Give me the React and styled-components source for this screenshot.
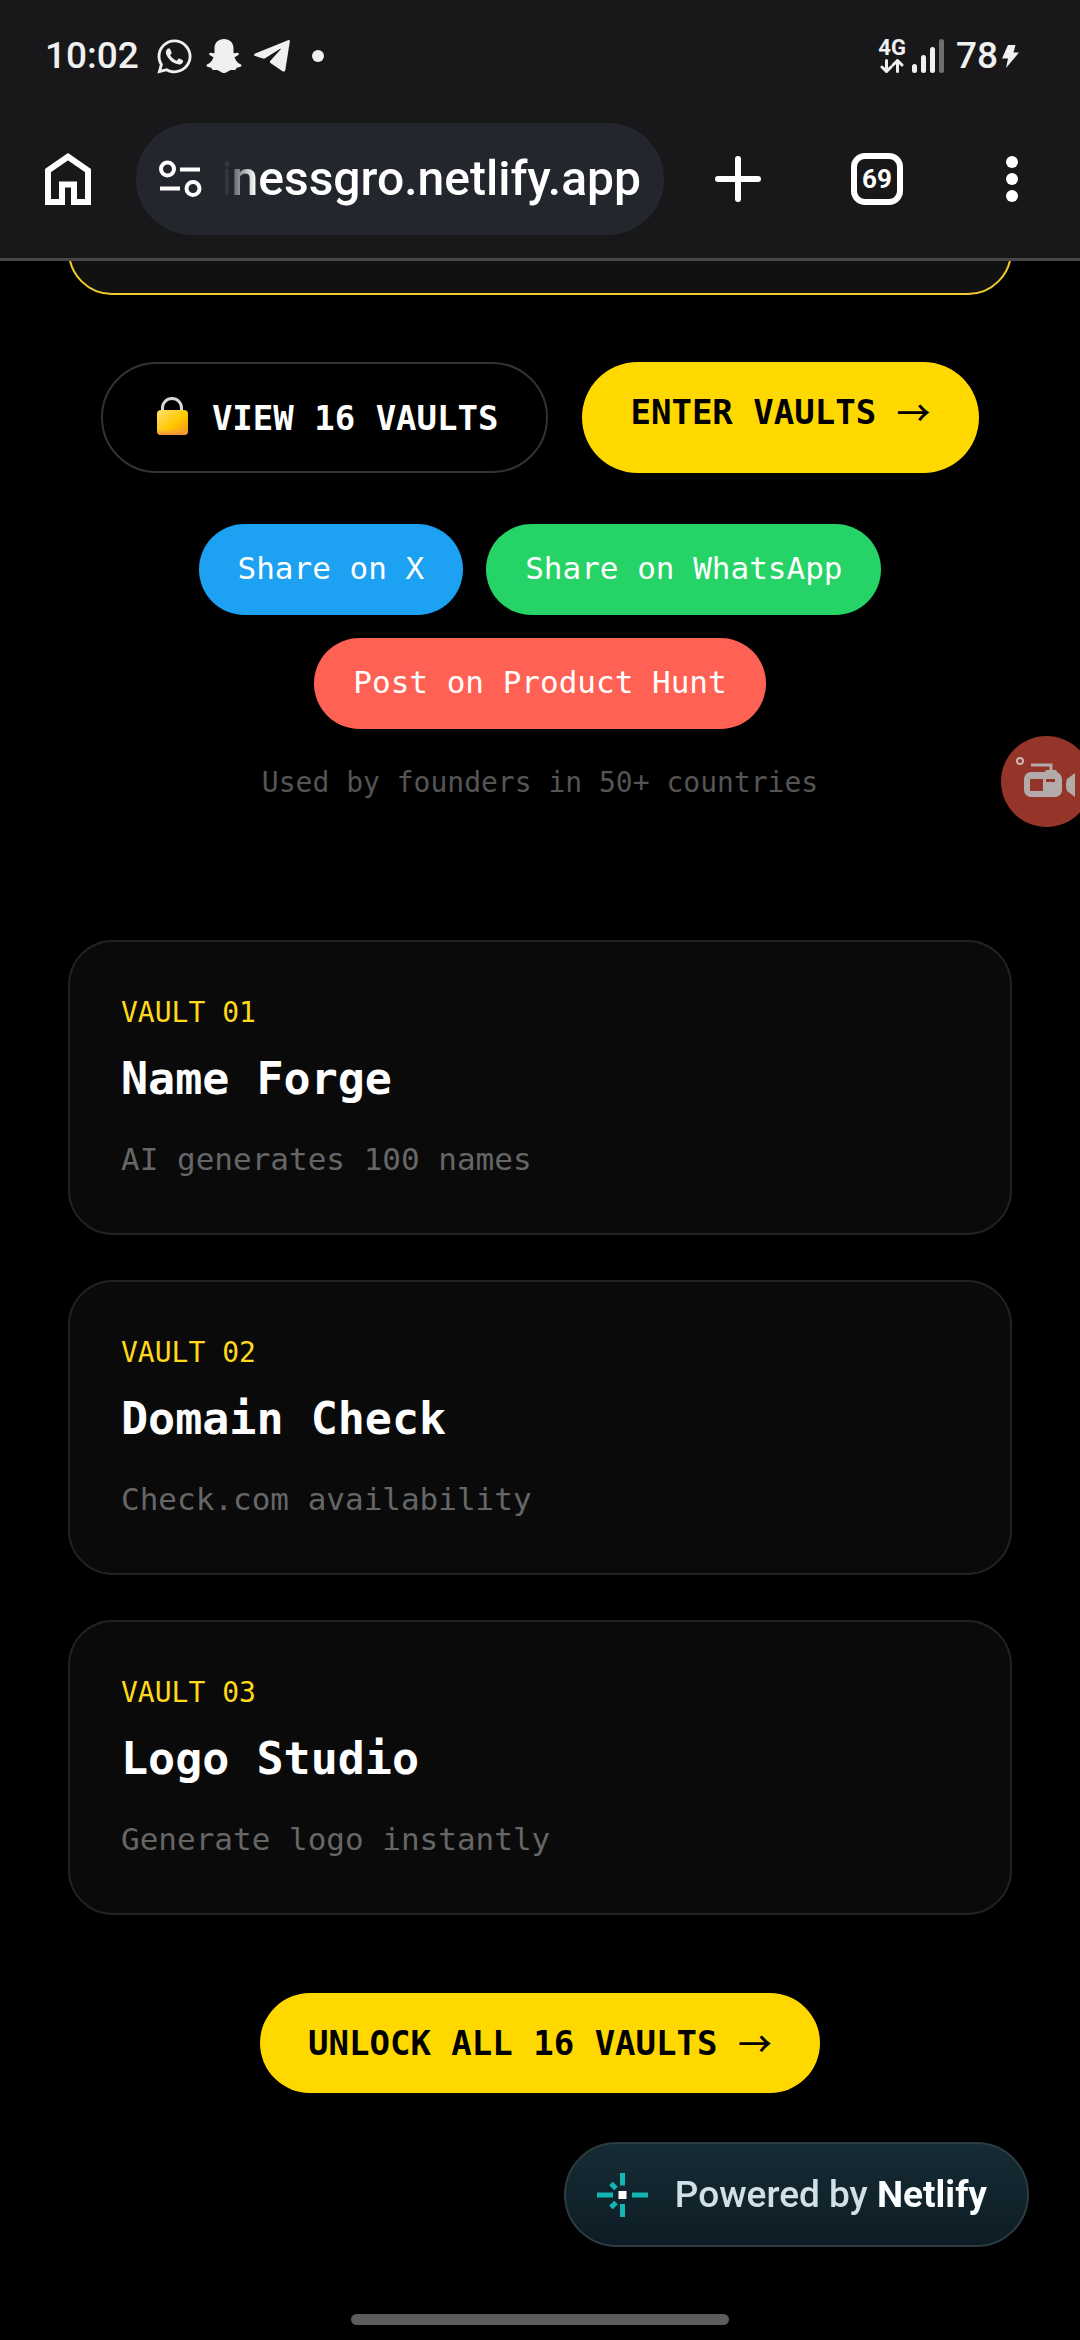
import React from "react";
import styled, { createGlobalStyle } from "styled-components";
import { FaWhatsapp } from "react-icons/fa";

const GlobalStyle = createGlobalStyle`
  *, *::before, *::after { box-sizing: border-box; }
  html { background: #000; }
  body {
    margin: 0;
    background: #000;
    color: #fff;
    font-family: "DejaVu Sans Mono", "Liberation Mono", monospace;
    overflow-x: hidden;
  }
  h2, p { margin: 0; }
  a { text-decoration: none; color: inherit; }
  button { border: 0; padding: 0; background: none; color: inherit; font: inherit; }
  svg { display: block; flex: none; }
`;

const uiFont = `Roboto, "Noto Sans", sans-serif`;

const BrowserChrome = styled.header`
  background: #18181a;
  border-bottom: 3px solid #48484b;
  font-family: ${uiFont};
`;

const StatusBar = styled.div`
  display: flex;
  justify-content: space-between;
  align-items: center;
  height: 100px;
  padding: 12px 61px 0 45px;
  color: #f0f0f0;
`;

const StatusGroup = styled.div`
  display: flex;
  align-items: center;
  gap: ${(p) => p.$gap}px;
`;

const StatusText = styled.span`
  font-size: 37px;
  line-height: 44px;
  font-weight: 500;
`;

const Clock = styled(StatusText)`
  margin-right: 4px;
`;

const Battery = styled.span`
  display: flex;
  align-items: center;
  gap: 4px;
  margin-left: 6px;
`;

const Dot = styled.span`
  width: 12px;
  height: 12px;
  margin-left: 10px;
  border-radius: 50%;
  background: currentColor;
`;

const Network = styled.span`
  display: flex;
  flex-direction: column;
  align-items: center;
  font-size: 22px;
  line-height: 18px;
  font-weight: 700;
  gap: 2px;
`;

const Toolbar = styled.div`
  display: flex;
  align-items: center;
  gap: 40px;
  height: 158px;
  padding: 0 44px 0 40px;
`;

const ToolButton = styled.button`
  display: grid;
  place-items: center;
  width: ${(p) => (p.$narrow ? 48 : 56)}px;
  height: 56px;
  flex: none;
`;

const ToolActions = styled.div`
  display: flex;
  gap: 83px;
  padding-left: 6px;
`;

const AddressBar = styled.div`
  display: flex;
  align-items: center;
  gap: 14px;
  flex: 1;
  min-width: 0;
  height: 112px;
  padding: 0 23px;
  border-radius: 56px;
  background: #24262e;
`;

const AddressInput = styled.input`
  flex: 1;
  min-width: 0;
  padding: 0;
  border: 0;
  outline: 0;
  background: none;
  color: #fff;
  font-family: ${uiFont};
  font-size: 48px;
  line-height: 60px;
  font-weight: 500;
  text-align: right;
  mask-image: linear-gradient(to right, transparent 8px, #000 40px);
`;

const TabCount = styled.span`
  display: grid;
  place-items: center;
  width: 52px;
  height: 52px;
  border: 6px solid #fff;
  border-radius: 14px;
  font-size: 26px;
  line-height: 30px;
  font-weight: 700;
`;

const Page = styled.main`
  padding: 0 68px 228px;
`;

const HeroClip = styled.div`
  display: flex;
  align-items: flex-end;
  height: 34px;
  overflow: hidden;
`;

const HeroCard = styled.div`
  flex: 1;
  height: 120px;
  border: 2px solid #f2cc2c;
  border-radius: 44px;
  background: #111;
`;

const Actions = styled.div`
  display: flex;
  justify-content: center;
  align-items: stretch;
  flex-wrap: wrap;
  gap: 34px;
  margin-top: 67px;
`;

const PillLink = styled.a`
  display: flex;
  align-items: ${(p) => (p.$outlined ? "center" : "flex-start")};
  padding: 28px 48px;
  border: ${(p) => (p.$outlined ? "2px solid #333" : "0")};
  border-radius: 56px;
  background: ${(p) => (p.$outlined ? "transparent" : "#ffd800")};
  color: ${(p) => (p.$outlined ? "#fff" : "#000")};
  font-size: 34px;
  line-height: 44px;
  font-weight: 700;
  white-space: pre;
`;

const Arrow = styled.span`
  font-family: "Noto Sans CJK JP", sans-serif;
  font-weight: 500;
`;

const ShareRow = styled.div`
  display: flex;
  justify-content: center;
  flex-wrap: wrap;
  gap: 23px;
  margin-top: 51px;
`;

const ShareLink = styled.a`
  padding: 22px 39px 25px;
  border-radius: 46px;
  background: ${(p) => p.$color};
  font-size: 31px;
  line-height: 44px;
`;

const Note = styled.p`
  margin-top: 32px;
  color: #555;
  font-size: 28px;
  line-height: 44px;
  text-align: center;
`;

const VaultList = styled.section`
  display: grid;
  gap: 45px;
  margin-top: 135px;
`;

const VaultCard = styled.article`
  padding: 51px;
  border: 2px solid #222;
  border-radius: 45px;
  background: #0a0a0a;
`;

const VaultLabel = styled.p`
  color: #ffd91a;
  font-size: 28px;
  line-height: 40px;
`;

const VaultTitle = styled.h2`
  margin-top: 20px;
  font-size: 45px;
  line-height: 52px;
  font-weight: 700;
`;

const VaultText = styled.p`
  margin-top: 31px;
  color: #666;
  font-size: 31px;
  line-height: 46px;
`;

const Unlock = styled.div`
  display: flex;
  justify-content: center;
  margin-top: 78px;
`;

const NetlifyBadge = styled.a`
  position: fixed;
  right: 51px;
  bottom: 93px;
  display: flex;
  align-items: center;
  gap: 27px;
  height: 105px;
  padding: 0 40px 0 31px;
  border: 2px solid #2b3c42;
  border-radius: 53px;
  background: linear-gradient(#162c35, #0d1c24);
  color: #d1e0e8;
  font-family: ${uiFont};
  font-size: 37px;
  line-height: 44px;
  font-weight: 500;

  strong { color: #fafeff; font-weight: 700; }
`;

const RecorderBubble = styled.button`
  position: fixed;
  top: 736px;
  right: -12px;
  width: 91px;
  height: 91px;
  border-radius: 50%;
  background: #953428;
`;

const GestureBar = styled.div`
  position: fixed;
  left: 50%;
  bottom: 15px;
  width: 35%;
  height: 11px;
  border-radius: 6px;
  background: #5c5c5c;
  transform: translateX(-50%);
`;

const SnapIcon = () => (
  <svg width="36" height="36" viewBox="0 0 36 36" fill="currentColor">
    <path d="M18 1c5.500 0 9.500 3.800 9.500 9v5c1.500.7 3.300-.6 4.600-.1 1.200.5.9 1.800-.1 2.400l-3.400 2c.8 3.400 2.900 5.700 6.400 7.300.8.4.7 1.400-.1 1.800-1.500.8-3 .8-4 1.400-.8.500-.7 2-1.900 2.200-1.800.3-3.600-.3-5.400.6-1.600.8-3.200 2.400-5.600 2.400s-4-1.600-5.600-2.400c-1.800-.9-3.600-.3-5.400-.6-1.200-.2-1.100-1.700-1.900-2.200-1-.6-2.500-.6-4-1.400-.8-.4-.9-1.400-.1-1.800 3.500-1.600 5.600-3.900 6.400-7.300l-3.400-2c-1-.6-1.300-1.900-.1-2.400 1.300-.5 3.100.8 4.600.1v-5C8.500 4.800 12.500 1 18 1z" />
  </svg>
);

const TelegramIcon = () => (
  <svg width="36" height="32" viewBox="0 0 36 32" fill="currentColor">
    <path d="M34 .2c1.300-.5 2 .2 1.800 1.500L31.300 30c-.3 1.700-1.500 2-2.800 1.200L16.500 23c-.9-.7-.9-1.500-.1-2.300L26.500 9.500c.5-.6 0-1-.7-.6L11.500 18c-.9.600-1.700.7-2.700.4L1.200 16c-1.500-.5-1.500-1.700 0-2.400z" />
  </svg>
);

const DataArrows = () => (
  <svg width="24" height="14" viewBox="0 0 24 14" fill="none" stroke="currentColor" strokeWidth="3" strokeLinecap="round" strokeLinejoin="round">
    <path d="M6.500 1.500v11M2 8l4.500 4.500L11 8M17.500 12.500v-11M13 6l4.500-4.500L22 6" />
  </svg>
);

const SignalIcon = () => (
  <svg width="32" height="34" viewBox="0 0 32 34" fill="currentColor">
    <rect x="0" y="25" width="5" height="9" rx="2.500" />
    <rect x="9" y="16" width="5" height="18" rx="2.500" />
    <rect x="18" y="8" width="5" height="26" rx="2.500" />
    <rect x="27" y="0" width="5" height="34" rx="2.500" fill="#6f6f71" />
  </svg>
);

const BoltIcon = () => (
  <svg width="17" height="23" viewBox="0 0 17 23" fill="currentColor">
    <path d="M6 0h7.500L11.500 7.500H17L4 23l2-9.500H0z" />
  </svg>
);

const HomeIcon = () => (
  <svg width="46" height="52" viewBox="0 0 46 52" fill="none" stroke="#fff" strokeWidth="6">
    <path d="M3 17.500 23 3.700l20 13.800V49H29V31.500H17V49H3z" />
  </svg>
);

const TuneIcon = () => (
  <svg width="43" height="38" viewBox="0 0 43 38" fill="none" stroke="#fff" strokeWidth="4">
    <circle cx="8.500" cy="9" r="6.500" />
    <path d="M21 9.500h20M1 28.500h20" />
    <circle cx="34" cy="28.500" r="6.500" />
  </svg>
);

const PlusIcon = () => (
  <svg width="46" height="46" viewBox="0 0 46 46" stroke="#fff" strokeWidth="6" strokeLinecap="round">
    <path d="M23 3v40M3 23h40" />
  </svg>
);

const MenuIcon = () => (
  <svg width="12" height="48" viewBox="0 0 12 48" fill="#fff">
    <circle cx="6" cy="7" r="6" />
    <circle cx="6" cy="24" r="6" />
    <circle cx="6" cy="41" r="6" />
  </svg>
);

const LockIcon = () => (
  <svg width="40" height="51" viewBox="0 0 40 51">
    <defs>
      <linearGradient id="lockBody" x1="0" y1="0" x2="1" y2="1">
        <stop offset="0" stopColor="#ffe070" />
        <stop offset="0.55" stopColor="#ffc800" />
        <stop offset="1" stopColor="#f58f1c" />
      </linearGradient>
      <linearGradient id="lockShade" x1="0" y1="0" x2="0" y2="1">
        <stop offset="0.75" stopColor="#f7a35a" stopOpacity="0" />
        <stop offset="1" stopColor="#f28c3a" />
      </linearGradient>
    </defs>
    <path d="M11.500 19v-3a9.500 9.500 0 0 1 19 0V19" fill="none" stroke="#d5d8da" strokeWidth="3" />
    <rect x="6" y="18" width="31" height="25" rx="4" fill="url(#lockBody)" />
    <rect x="6" y="18" width="31" height="25" rx="4" fill="url(#lockShade)" />
  </svg>
);

const NetlifyIcon = () => (
  <svg width="51" height="44" viewBox="0 0 51 44" fill="none" stroke="#13b6b3" strokeWidth="5">
    <path d="M25.500 0v12.500M25.500 31v13M0 22h16M35 22h16" />
    <path d="M14 10.500l5 5M14 34.500l5-5" />
    <rect x="21.500" y="18" width="8" height="8" fill="#fff" stroke="none" />
  </svg>
);

const CameraIcon = () => (
  <svg width="91" height="91" viewBox="0 0 91 91">
    <circle cx="19" cy="25" r="3" fill="none" stroke="#d0b3ae" strokeWidth="2" />
    <path d="M30 29h20v8" fill="none" stroke="#b3aba9" strokeWidth="3" />
    <rect x="23" y="36" width="38" height="25" rx="7" fill="#b3aba9" />
    <rect x="44" y="34" width="12" height="6" rx="2" fill="#b3aba9" />
    <rect x="29" y="43" width="13" height="12" fill="#953428" />
    <rect x="45" y="43" width="9" height="3" fill="#953428" />
    <path d="M74 37v24l-8-6q-2-6 0-12z" fill="#b3aba9" />
  </svg>
);

const shares = [
  { label: "Share on X", color: "#1da1f2" },
  { label: "Share on WhatsApp", color: "#25d366" },
  { label: "Post on Product Hunt", color: "#ff6154" },
];

const vaults = [
  { id: "01", title: "Name Forge", text: "AI generates 100 names" },
  { id: "02", title: "Domain Check", text: "Check.com availability" },
  { id: "03", title: "Logo Studio", text: "Generate logo instantly" },
];

export default function App() {
  return (
    <>
      <GlobalStyle />
      <BrowserChrome>
        <StatusBar>
          <StatusGroup $gap={12}>
            <Clock>10:02</Clock>
            <FaWhatsapp size={39} />
            <SnapIcon />
            <TelegramIcon />
            <Dot />
          </StatusGroup>
          <StatusGroup $gap={6}>
            <Network>
              4G
              <DataArrows />
            </Network>
            <SignalIcon />
            <Battery>
              <StatusText>78</StatusText>
              <BoltIcon />
            </Battery>
          </StatusGroup>
        </StatusBar>
        <Toolbar>
          <ToolButton aria-label="Home"><HomeIcon /></ToolButton>
          <AddressBar>
            <TuneIcon />
            <AddressInput aria-label="Address" defaultValue="inessgro.netlify.app" />
          </AddressBar>
          <ToolActions>
            <ToolButton aria-label="New tab"><PlusIcon /></ToolButton>
            <ToolButton aria-label="Tabs"><TabCount>69</TabCount></ToolButton>
            <ToolButton aria-label="Menu" $narrow><MenuIcon /></ToolButton>
          </ToolActions>
        </Toolbar>
      </BrowserChrome>

      <Page>
        <HeroClip>
          <HeroCard />
        </HeroClip>
        <Actions>
          <PillLink href="#vaults" $outlined>
            <LockIcon /> VIEW 16 VAULTS
          </PillLink>
          <PillLink href="#enter">
            ENTER VAULTS <Arrow>→</Arrow>
          </PillLink>
        </Actions>
        <ShareRow>
          {shares.map((s) => (
            <ShareLink key={s.label} href="#share" $color={s.color}>{s.label}</ShareLink>
          ))}
        </ShareRow>
        <Note>Used by founders in 50+ countries</Note>
        <VaultList id="vaults">
          {vaults.map((v) => (
            <VaultCard key={v.id}>
              <VaultLabel>VAULT {v.id}</VaultLabel>
              <VaultTitle>{v.title}</VaultTitle>
              <VaultText>{v.text}</VaultText>
            </VaultCard>
          ))}
        </VaultList>
        <Unlock>
          <PillLink href="#unlock">
            UNLOCK ALL 16 VAULTS <Arrow>→</Arrow>
          </PillLink>
        </Unlock>
      </Page>

      <RecorderBubble aria-label="Screen recorder"><CameraIcon /></RecorderBubble>
      <NetlifyBadge href="#netlify">
        <NetlifyIcon />
        <span>Powered by <strong>Netlify</strong></span>
      </NetlifyBadge>
      <GestureBar />
    </>
  );
}
